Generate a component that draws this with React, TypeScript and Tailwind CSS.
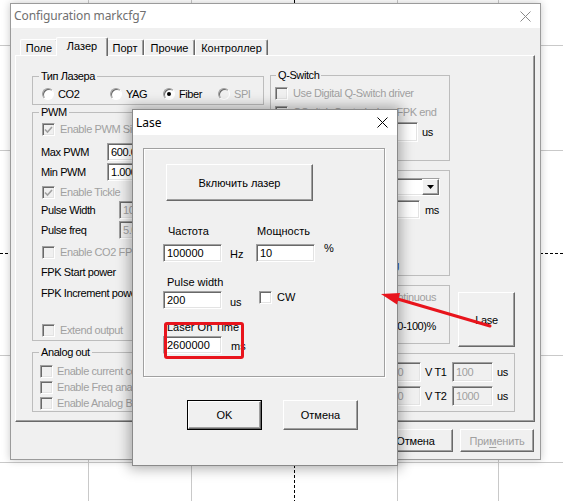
import React from "react";

const raised =
  "border border-t-white border-l-white border-r-[#696969] border-b-[#696969] shadow-[inset_-1px_-1px_0_#a0a0a0] bg-[#f0f0f0]";
const sunken =
  "border border-t-[#a0a0a0] border-l-[#a0a0a0] border-r-white border-b-white shadow-[inset_1px_1px_0_#696969,inset_-1px_-1px_0_#e3e3e3]";

function CloseX({ color }: { color: string }) {
  return (
    <svg width="11" height="11" viewBox="0 0 11 11" className="shrink-0">
      <path d="M0.5 0.5 L10.5 10.5 M10.5 0.5 L0.5 10.5" stroke={color} strokeWidth="1" fill="none" />
    </svg>
  );
}

function Check({ checked, disabled }: { checked?: boolean; disabled?: boolean }) {
  return (
    <span
      className={`relative inline-block shrink-0 w-[13px] h-[13px] ${sunken} ${
        disabled ? "bg-[#f0f0f0]" : "bg-white"
      }`}
    >
      {checked && (
        <svg className="absolute left-[1px] top-[1px]" width="9" height="9" viewBox="0 0 9 9">
          <path d="M1 4.5 L3.5 7 L8 2" fill="none" stroke={disabled ? "#a0a0a0" : "#000"} strokeWidth="1.6" />
        </svg>
      )}
    </span>
  );
}

function Radio({ checked, disabled }: { checked?: boolean; disabled?: boolean }) {
  return (
    <span
      className={`relative inline-block shrink-0 w-[12px] h-[12px] rounded-full border border-t-[#a0a0a0] border-l-[#a0a0a0] border-r-white border-b-white shadow-[inset_1px_1px_0_#696969] ${
        disabled ? "bg-[#f0f0f0]" : "bg-white"
      }`}
    >
      {checked && <span className="absolute left-[3px] top-[3px] w-[4px] h-[4px] rounded-full bg-black" />}
    </span>
  );
}

function Field({ className, value, disabled }: { className: string; value?: string; disabled?: boolean }) {
  return (
    <div
      className={`shrink-0 flex items-center pl-[3px] overflow-hidden whitespace-nowrap ${sunken} ${
        disabled ? "bg-[#f0f0f0] text-[#a0a0a0]" : "bg-white text-black"
      } ${className}`}
    >
      {value}
    </div>
  );
}

function Btn({
  className,
  children,
  disabled,
}: {
  className: string;
  children: React.ReactNode;
  disabled?: boolean;
}) {
  return (
    <div
      className={`shrink-0 flex items-center justify-center ${raised} ${disabled ? "text-[#a0a0a0]" : "text-black"} ${className}`}
    >
      {children}
    </div>
  );
}

function CheckRow({
  label,
  checked,
  disabled,
  className,
}: {
  label: string;
  checked?: boolean;
  disabled?: boolean;
  className: string;
}) {
  return (
    <div className={`flex items-center h-[14px] whitespace-nowrap ${className}`}>
      <Check checked={checked} disabled={disabled} />
      <span className={disabled ? "text-[#a0a0a0]" : "text-black"}>{label}</span>
    </div>
  );
}

function Grid() {
  const vx = [88, 191, 397, 498];
  const hy = [45, 150, 355, 462];
  return (
    <svg className="absolute left-0 top-0" width="563" height="501">
      {vx.map((x) => (
        <line key={"v" + x} x1={x + 0.5} y1={0} x2={x + 0.5} y2={501} stroke="#c9c9c9" strokeWidth="1" />
      ))}
      {hy.map((y) => (
        <line key={"h" + y} x1={0} y1={y + 0.5} x2={563} y2={y + 0.5} stroke="#c9c9c9" strokeWidth="1" />
      ))}
      <line x1={294.5} y1={0} x2={294.5} y2={501} stroke="#000" strokeWidth="1" strokeDasharray="3 2" />
      <line x1={0} y1={253.5} x2={563} y2={253.5} stroke="#000" strokeWidth="1" strokeDasharray="3 2" />
    </svg>
  );
}

function Tab({ label, w, selected }: { label: string; w: string; selected?: boolean }) {
  if (selected) {
    return (
      <div
        className={`relative z-10 -mx-[2px] -mb-px h-[19px] flex items-center justify-center pb-[2px] rounded-t-[2px] bg-[#f0f0f0] border-t border-l border-white border-r border-r-[#696969] shadow-[inset_-1px_0_0_#a0a0a0] ${w}`}
      >
        {label}
      </div>
    );
  }
  return (
    <div
      className={`h-[16px] flex items-center justify-center rounded-t-[2px] border-t border-l border-white border-r border-r-[#696969] shadow-[inset_-1px_0_0_#a0a0a0] ${w}`}
    >
      {label}
    </div>
  );
}

function MainWindow() {
  return (
    <div className="absolute left-[10px] top-[3px] w-[531px] h-[457px] flex flex-col border border-[#9b9b9b] bg-[#f0f0f0] shadow-[0_0_8px_rgba(0,0,0,0.22)]">
      {/* title bar */}
      <div className="h-[24px] shrink-0 bg-white flex items-center justify-between pl-[3px] pr-[9px]">
        <span className="font-['Noto_Sans',sans-serif] text-[12px] leading-[16px] text-[#707070] tracking-[-0.1px]">
          Configuration markcfg7
        </span>
        <CloseX color="#8a8a8a" />
      </div>

      <div className="flex-1 flex flex-col pl-[4px] pr-[5px]">
        {/* tabs */}
        <div className="mt-[9px] h-[18px] flex items-end pl-[5px]">
          <Tab label="Поле" w="w-[38px]" />
          <Tab label="Лазер" w="w-[52px]" selected />
          <Tab label="Порт" w="w-[38px]" />
          <Tab label="Прочие" w="w-[51px]" />
          <Tab label="Контроллер" w="w-[73px]" />
        </div>

        {/* panel */}
        <div className="w-[520px] h-[367px] flex pl-[16px] border border-t-white border-l-white border-r-[#696969] border-b-[#696969] shadow-[inset_-1px_-1px_0_#a0a0a0] tracking-[-0.4px]">
          {/* left column */}
          <div className="w-[232px] flex flex-col shrink-0">
            <fieldset className="mt-[13px] h-[36px] border border-[#bdbdbd]">
              <legend className="ml-[6px] px-[2px] leading-[14px]">Тип Лазера</legend>
              <div className="mt-[4px] h-[14px] flex items-center pl-[9px] whitespace-nowrap">
                <div className="w-[68px] flex items-center gap-[4px]">
                  <Radio />
                  <span>CO2</span>
                </div>
                <div className="w-[53px] flex items-center gap-[4px]">
                  <Radio />
                  <span>YAG</span>
                </div>
                <div className="w-[55px] flex items-center gap-[4px]">
                  <Radio checked />
                  <span>Fiber</span>
                </div>
                <div className="flex items-center gap-[4px]">
                  <Radio disabled />
                  <span className="text-[#a0a0a0]">SPI</span>
                </div>
              </div>
            </fieldset>

            <fieldset className="h-[236px] border border-[#bdbdbd]">
              <legend className="ml-[6px] px-[2px] leading-[14px]">PWM</legend>
              <div className="flex flex-col whitespace-nowrap">
                <CheckRow label="Enable PWM Signal" checked disabled className="mt-[3px] pl-[9px] gap-[5px]" />
                <div className="mt-[7px] h-[18px] flex items-center pl-[8px]">
                  <span className="w-[66px] shrink-0">Max PWM</span>
                  <Field className="w-[80px] h-[18px]" value="600.000" />
                </div>
                <div className="mt-[2px] h-[18px] flex items-center pl-[8px]">
                  <span className="w-[66px] shrink-0">Min PWM</span>
                  <Field className="w-[80px] h-[18px]" value="1.000" />
                </div>
                <CheckRow label="Enable Tickle" checked disabled className="mt-[4px] pl-[9px] gap-[5px]" />
                <div className="mt-[2px] h-[18px] flex items-center pl-[8px]">
                  <span className="w-[78px] shrink-0">Pulse Width</span>
                  <Field className="w-[70px] h-[18px]" value="10" disabled />
                </div>
                <div className="mt-[2px] h-[18px] flex items-center pl-[8px]">
                  <span className="w-[78px] shrink-0">Pulse freq</span>
                  <Field className="w-[70px] h-[18px]" value="5.0" disabled />
                </div>
                <CheckRow label="Enable CO2 FPK" disabled className="mt-[6px] pl-[9px] gap-[5px]" />
                <div className="mt-[6px] h-[14px] flex items-center pl-[8px]">FPK Start power</div>
                <div className="mt-[7px] h-[14px] flex items-center pl-[8px]">FPK Increment power</div>
                <CheckRow label="Extend output" disabled className="mt-[23px] pl-[9px] gap-[5px]" />
              </div>
            </fieldset>

            <fieldset className="mt-[4px] h-[67px] border border-[#bdbdbd]">
              <legend className="ml-[6px] px-[2px] leading-[14px]">Analog out</legend>
              <div className="flex flex-col whitespace-nowrap">
                <CheckRow label="Enable current control" disabled className="mt-[5px] pl-[7px] gap-[4px]" />
                <CheckRow label="Enable Freq analog" disabled className="mt-[2px] pl-[7px] gap-[4px]" />
                <CheckRow label="Enable Analog Burst" disabled className="mt-[2px] pl-[7px] gap-[4px]" />
              </div>
            </fieldset>
          </div>

          {/* right column */}
          <div className="ml-[6px] w-[245px] flex flex-col shrink-0">
            <fieldset className="mt-[12px] w-[180px] h-[93px] border border-[#bdbdbd]">
              <legend className="ml-[5px] px-[2px] leading-[14px]">Q-Switch</legend>
              <div className="flex flex-col whitespace-nowrap">
                <CheckRow label="Use Digital Q-Switch driver" disabled className="mt-[4px] pl-[4px] gap-[5px]" />
                <CheckRow label="QSwitch Control when FPK end" disabled className="mt-[5px] pl-[4px] gap-[5px]" />
                <div className="mt-[3px] h-[20px] flex items-center pl-[22px]">
                  <span className="w-[57px] shrink-0">Delay</span>
                  <Field className="w-[68px] h-[20px]" value="" />
                  <span className="ml-[4px]">us</span>
                </div>
              </div>
            </fieldset>

            <div className="mt-[9px] w-[180px] h-[106px] border border-[#bdbdbd] flex flex-col whitespace-nowrap">
              <div className="mt-[7px] h-[18px] flex items-center pl-[8px]">
                <span className="w-[61px] shrink-0">Mode</span>
                <div className={`w-[100px] h-[18px] flex justify-end bg-white ${sunken}`}>
                  <div className={`w-[17px] h-full flex items-center justify-center ${raised}`}>
                    <svg width="7" height="4" viewBox="0 0 7 4">
                      <path d="M0 0 H7 L3.5 4 Z" fill="#000" />
                    </svg>
                  </div>
                </div>
              </div>
              <div className="mt-[4px] h-[19px] flex items-center pl-[8px]">
                <span className="w-[71px] shrink-0">Time</span>
                <Field className="w-[70px] h-[19px]" value="" />
                <span className="ml-[5px]">ms</span>
              </div>
              <div className="mt-[39px] h-[14px] flex items-center justify-end pr-[50px]">
                <span className="text-[#1f3fa6]">Setting</span>
              </div>
            </div>

            <div className="mt-[9px] flex items-start">
              <div className="w-[180px] h-[59px] border border-[#bdbdbd] flex flex-col whitespace-nowrap">
                <div className="mt-[4px] h-[14px] flex items-center justify-end pr-[13px] text-[#a0a0a0]">
                  Continuous
                </div>
                <div className="mt-[15px] h-[14px] flex items-center justify-end pr-[13px]">Power (0-100)%</div>
              </div>
              <Btn className="ml-[8px] mt-[7px] w-[57px] h-[55px]">Lase</Btn>
            </div>

            <div className="mt-[6px] w-[245px] h-[59px] border border-[#bdbdbd] flex flex-col whitespace-nowrap">
              <div className="mt-[8px] h-[20px] flex items-center pl-[111px]">
                <Field className="w-[39px] h-[20px]" value="100" disabled />
                <span className="ml-[4px] w-[27px] shrink-0">V T1</span>
                <Field className="w-[41px] h-[20px]" value="100" disabled />
                <span className="ml-[4px]">us</span>
              </div>
              <div className="mt-[4px] h-[20px] flex items-center pl-[111px]">
                <Field className="w-[39px] h-[20px]" value="100" disabled />
                <span className="ml-[4px] w-[27px] shrink-0">V T2</span>
                <Field className="w-[41px] h-[20px]" value="1000" disabled />
                <span className="ml-[4px]">us</span>
              </div>
            </div>
          </div>
        </div>

        {/* bottom buttons */}
        <div className="mt-[7px] flex justify-end gap-[7px] pr-[1px] tracking-[-0.2px]">
          <Btn className="w-[75px] h-[23px]">OK</Btn>
          <Btn className="w-[75px] h-[23px]">Отмена</Btn>
          <Btn className="w-[74px] h-[23px]" disabled>
            <span>
              При<span className="underline underline-offset-2">м</span>енить
            </span>
          </Btn>
        </div>
      </div>
    </div>
  );
}

function LaseDialog() {
  return (
    <div className="absolute left-[132px] top-[109px] w-[266px] h-[357px] flex flex-col border border-[#8a8a8a] bg-[#f0f0f0] shadow-[0_0_12px_3px_rgba(0,0,0,0.3)]">
      <div className="h-[25px] shrink-0 bg-white flex items-center justify-between pl-[3px] pr-[9px]">
        <span className="font-['Noto_Sans',sans-serif] text-[12px] leading-[16px] text-black">Lase</span>
        <CloseX color="#000" />
      </div>

      <div className="flex flex-col">
        <div className="ml-[10px] mt-[13px] w-[242px] h-[229px] border border-[#a0a0a0] shadow-[inset_1px_1px_0_white,1px_1px_0_white] flex flex-col whitespace-nowrap">
          <Btn className="ml-[22px] mt-[15px] w-[147px] h-[37px]">Включить лазер</Btn>

          <div className="mt-[23px] h-[14px] flex items-center pl-[24px]">
            <span className="w-[89px] shrink-0">Частота</span>
            <span>Мощность</span>
          </div>
          <div className="mt-[6px] h-[18px] flex items-center pl-[19px]">
            <Field className="w-[59px] h-[18px]" value="100000" />
            <span className="ml-[8px] w-[26px] shrink-0 pt-[2px]">Hz</span>
            <Field className="w-[59px] h-[18px]" value="10" />
            <span className="ml-[9px] self-start -mt-[3px]">%</span>
          </div>

          <div className="mt-[13px] h-[14px] flex items-center pl-[23px]">Pulse width</div>
          <div className="mt-[2px] h-[18px] flex items-center pl-[19px]">
            <Field className="w-[59px] h-[18px]" value="200" />
            <span className="ml-[8px] w-[29px] shrink-0 pt-[4px]">us</span>
            <span className="self-start">
              <Check />
            </span>
            <span className="ml-[5px] self-start -mt-[1px]">CW</span>
          </div>

          <div className="mt-[11px] h-[14px] flex items-center pl-[23px]">Laser On Time</div>
          <div className="mt-[2px] h-[18px] flex items-center pl-[19px]">
            <Field className="w-[59px] h-[18px]" value="2600000" />
            <span className="ml-[9px] pt-[1px]">ms</span>
          </div>
        </div>

        <div className="mt-[23px] flex items-center pl-[54px]">
          <div className="w-[75px] h-[30px] border border-black flex">
            <Btn className="w-full h-full">OK</Btn>
          </div>
          <Btn className="ml-[21px] w-[75px] h-[30px]">Отмена</Btn>
        </div>
      </div>

      {/* red annotation rectangle */}
      <div className="absolute left-[31px] top-[212px] w-[80px] h-[37px] border-[3px] border-[#e8141c] rounded-[3px]" />
    </div>
  );
}

function Arrow() {
  return (
    <svg className="absolute left-0 top-0 pointer-events-none" width="563" height="501">
      <line x1="490" y1="326" x2="396" y2="298.5" stroke="#e8141c" strokeWidth="3" strokeLinecap="round" />
      <polygon points="381,294 400,293 397,304.5" fill="#e8141c" />
    </svg>
  );
}

export default function App() {
  return (
    <div className="relative w-[563px] h-[501px] overflow-hidden bg-white font-['Liberation_Sans',Arial,sans-serif] text-[11px] leading-[14px] text-black">
      <Grid />
      <MainWindow />
      <LaseDialog />
      <Arrow />
    </div>
  );
}
